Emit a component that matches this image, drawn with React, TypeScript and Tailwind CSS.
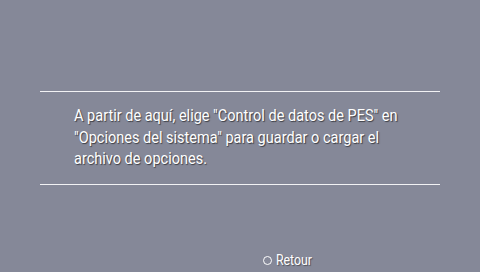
export default function App() {
  return (
    <main
      className="w-[480px] h-[272px] bg-[#858898] flex flex-col text-white overflow-hidden"
      style={{ fontFamily: "Roboto, 'Liberation Sans', sans-serif" }}
    >
      <div className="h-[91px]" />
      <div className="mx-[40px] h-px bg-[#f2f2f4]" />
      <div className="h-[92px] pl-[74px] pt-[13px]">
        <p className="origin-left scale-x-[0.88] w-[440px] text-[16.5px] leading-[21.5px] [text-shadow:1px_1px_1px_rgba(0,0,0,0.55)]">
          A partir de aquí, elige "Control de datos de PES" en
          <br />
          "Opciones del sistema" para guardar o cargar el
          <br />
          archivo de opciones.
        </p>
      </div>
      <div className="mx-[40px] h-px bg-[#f2f2f4]" />
      <div className="flex-1" />
      <div className="h-[22px] flex items-center pl-[263px] gap-[4px] pb-[1px]">
        <span className="w-[9px] h-[9px] rounded-full border-[1.5px] border-white" />
        <span className="origin-left scale-x-[0.88] text-[14px] [text-shadow:1px_1px_1px_rgba(0,0,0,0.4)]">
          Retour
        </span>
      </div>
    </main>
  );
}
